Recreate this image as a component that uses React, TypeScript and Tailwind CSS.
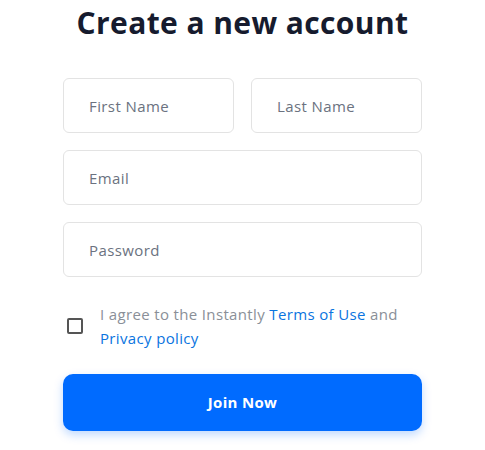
export default function App() {
  return (
    <div className="min-h-[450px] bg-white flex justify-center font-['Open_Sans','Noto_Sans',sans-serif]">
      <div className="w-[359px] flex flex-col">
        <h1 className="mt-[4px] text-center text-[30px] leading-[38px] font-bold tracking-[0.4px] text-[#161b2e] whitespace-nowrap">
          Create a new account
        </h1>

        <div className="mt-[36px] flex flex-col gap-[17px]">
          <div className="flex gap-[17px]">
            <input
              placeholder="First Name"
              className="w-[171px] h-[55px] rounded-[6px] border border-[#e3e3e3] px-[25px] text-[15px] tracking-[0.4px] text-[#374151] placeholder:text-[#6b7280] outline-none"
            />
            <input
              placeholder="Last Name"
              className="w-[171px] h-[55px] rounded-[6px] border border-[#e3e3e3] px-[25px] text-[15px] tracking-[0.4px] text-[#374151] placeholder:text-[#6b7280] outline-none"
            />
          </div>
          <input
            placeholder="Email"
            className="w-full h-[55px] rounded-[6px] border border-[#e3e3e3] px-[25px] text-[15px] tracking-[0.4px] text-[#374151] placeholder:text-[#6b7280] outline-none"
          />
          <input
            type="password"
            placeholder="Password"
            className="w-full h-[55px] rounded-[6px] border border-[#e3e3e3] px-[25px] text-[15px] tracking-[0.4px] text-[#374151] placeholder:text-[#6b7280] outline-none"
          />
        </div>

        {/* Terms */}
        <div className="mt-[25px] flex items-center gap-[17px] pl-[4px]">
          <span className="w-[16px] h-[16px] shrink-0 rounded-[2px] border-2 border-[#555]" />
          <p className="text-[15px] leading-[24px] tracking-[0.35px] text-[#8a8f98] whitespace-nowrap">
            I agree to the Instantly{' '}
            <a className="text-[#0a74e0] font-medium">Terms of Use</a> and
            <br />
            <a className="text-[#0a74e0] font-medium">Privacy policy</a>
          </p>
        </div>

        <button className="mt-[24px] h-[57px] w-full rounded-[10px] bg-[#006bff] text-white text-[15px] font-bold tracking-[0.3px] shadow-[0_4px_10px_rgba(0,107,255,0.25)]">
          Join Now
        </button>
      </div>
    </div>
  )
}
